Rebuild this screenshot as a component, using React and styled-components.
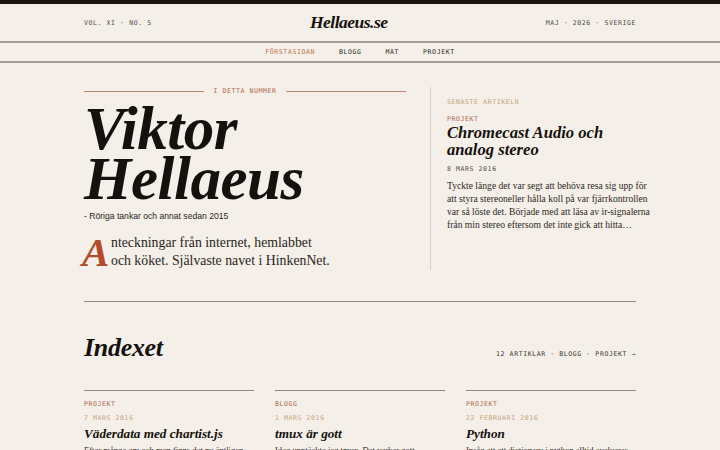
import React from "react";
import styled, { createGlobalStyle } from "styled-components";

const GlobalStyle = createGlobalStyle`
  html, body {
    margin: 0;
    padding: 0;
    background: #f4efe8;
    color: #1a1512;
  }
  * { box-sizing: border-box; }
`;

const mono = `"DejaVu Sans Mono", "Liberation Mono", monospace`;
const display = `"Liberation Serif", "DejaVu Serif", serif`;

const Page = styled.div`
  min-height: 450px;
  background: #f4efe8;
`;

const TopBar = styled.div`
  height: 4px;
  background: #1a1410;
`;

const Masthead = styled.header`
  display: flex;
  align-items: center;
  justify-content: space-between;
  height: 39px;
  padding: 0 84px;
  border-bottom: 2px solid #a39d95;
`;

const Meta = styled.div`
  font-family: ${mono};
  font-size: 6.5px;
  letter-spacing: 0.6px;
  color: ${(p) => p.color || "#4f4a44"};
  text-transform: uppercase;
  white-space: nowrap;
  line-height: ${(p) => p.lh || "10px"};
`;

const Logo = styled.div`
  font-family: ${display};
  font-weight: 700;
  font-style: italic;
  font-size: 17.5px;
  letter-spacing: -0.5px;
  color: #15110e;
`;

const Nav = styled.nav`
  display: flex;
  justify-content: center;
  align-items: center;
  gap: 24px;
  height: 20px;
  border-bottom: 2px solid #a39d95;
`;

const NavItem = styled.a`
  font-family: ${mono};
  font-size: 6.5px;
  letter-spacing: 0.6px;
  color: ${(p) => (p.active ? "#c0714f" : "#2a2520")};
  text-decoration: none;
`;

const Container = styled.main`
  padding: 0 84px;
`;

const Hero = styled.section`
  display: flex;
  padding: 24px 0 31px;
  border-bottom: 1.5px solid #8f8980;
`;

const HeroLeft = styled.div`
  width: 322px;
  flex-shrink: 0;
`;

const Kicker = styled.div`
  display: flex;
  align-items: center;
  gap: 9px;
  height: 8px;
  &::before, &::after {
    content: "";
    flex: 1;
    height: 1px;
    background: #b98570;
  }
`;

const Name = styled.h1`
  margin: 9px 0 0;
  font-family: ${display};
  font-weight: 700;
  font-style: italic;
  font-size: 61px;
  line-height: 50px;
  letter-spacing: -0.5px;
  color: #15110e;
`;

const Tagline = styled.p`
  margin: 6px 0 0;
  font-family: "Liberation Sans", Arial, sans-serif;
  font-size: 8.6px;
  line-height: 12px;
  color: #2a2520;
`;

const Lede = styled.p`
  margin: 12px 0 0;
  font-family: ${display};
  font-size: 13.8px;
  line-height: 18px;
  white-space: nowrap;
  color: #2a2520;
`;

const DropCap = styled.span`
  float: left;
  width: 29px;
  height: 35px;
  font-family: ${display};
  font-weight: 700;
  font-style: italic;
  font-size: 41px;
  line-height: 35px;
  margin: 1px 0 0 -2px;
  color: #b04b2c;
`;

const HeroRight = styled.aside`
  flex: 1;
  min-width: 0;
  margin-left: 24px;
  padding: 10px 0 0 16px;
  border-left: 1px solid #d8d1c7;
`;

const Category = styled(Meta)`
  margin-top: ${(p) => p.mt || "0"};
`;

const FeatureTitle = styled.h2`
  margin: 0;
  font-family: ${display};
  font-weight: 700;
  font-style: italic;
  font-size: 16.6px;
  line-height: 17px;
  color: #15110e;
`;

const Excerpt = styled.p`
  margin: ${(p) => p.mt || "5px"} 0 0;
  font-family: ${display};
  font-size: ${(p) => p.size || "9.6px"};
  line-height: 13px;
  color: #2e2924;
  white-space: ${(p) => (p.lines ? "nowrap" : "normal")};
`;

const IndexHead = styled.div`
  display: flex;
  justify-content: space-between;
  align-items: baseline;
  margin-top: 31px;
`;

const IndexTitle = styled.h2`
  margin: 0;
  font-family: ${display};
  font-weight: 700;
  font-style: italic;
  font-size: 26px;
  line-height: 30px;
  letter-spacing: -0.3px;
  color: #15110e;
`;

const Cards = styled.div`
  display: grid;
  grid-template-columns: repeat(3, 1fr);
  gap: 21px;
  margin-top: 27px;
`;

const Card = styled.article`
  border-top: 1.5px solid #8f8980;
  padding-top: 9px;
`;

const CardTitle = styled.h3`
  margin: 3px 0 0;
  font-family: ${display};
  font-weight: 700;
  font-style: italic;
  font-size: 13.2px;
  line-height: 16px;
  color: #15110e;
`;

const accent = "#b0654a";
const tan = "#c8a47c";

const excerptLines = [
  "Tyckte länge det var segt att behöva resa sig upp för",
  "att styra stereoneller hålla koll på var fjärrkontrollen",
  "var så löste det. Började med att läsa av ir-signalerna",
  "från min stereo eftersom det inte gick att hitta…",
];

const posts = [
  { cat: "Projekt", date: "7 mars 2016", title: "Väderdata med chartist.js", text: "Efter många om och men finns det nu äntligen lite väderdata att titta på i HinkenNet." },
  { cat: "Blogg", date: "1 mars 2016", title: "tmux är gott", text: "Idag upptäckte jag tmux. Det verkar gott." },
  { cat: "Projekt", date: "22 februari 2016", title: "Python", text: "Insåg att ett dictionary i python alltid evalueras alla värden när det skapas." },
];

export default function App() {
  return (
    <Page>
      <GlobalStyle />
      <TopBar />
      <Masthead>
        <Meta>Vol. XI · No. 5</Meta>
        <Logo>Hellaeus.se</Logo>
        <Meta>Maj · 2026 · Sverige</Meta>
      </Masthead>
      <Nav>
        <NavItem active>FÖRSTASIDAN</NavItem>
        <NavItem>BLOGG</NavItem>
        <NavItem>MAT</NavItem>
        <NavItem>PROJEKT</NavItem>
      </Nav>
      <Container>
        <Hero>
          <HeroLeft>
            <Kicker>
              <Meta color={accent} lh="8px">I detta nummer</Meta>
            </Kicker>
            <Name>
              Viktor
              <br />
              Hellaeus
            </Name>
            <Tagline>- Röriga tankar och annat sedan 2015</Tagline>
            <Lede>
              <DropCap>A</DropCap>nteckningar från internet, hemlabbet
              <br />
              och köket. Självaste navet i HinkenNet.
            </Lede>
          </HeroLeft>
          <HeroRight>
            <Category color={tan}>Senaste artikeln</Category>
            <Category color={accent} mt="7px">Projekt</Category>
            <FeatureTitle>Chromecast Audio och analog stereo</FeatureTitle>
            <Category color="#4f4a44" mt="6px">8 mars 2016</Category>
            <Excerpt mt="5px" lines>
              {excerptLines.map((l, i) => (
                <React.Fragment key={i}>
                  {l}
                  {i < excerptLines.length - 1 && <br />}
                </React.Fragment>
              ))}
            </Excerpt>
          </HeroRight>
        </Hero>
        <IndexHead>
          <IndexTitle>Indexet</IndexTitle>
          <Meta color="#3a352f">12 artiklar · Blogg · Projekt →</Meta>
        </IndexHead>
        <Cards>
          {posts.map((p) => (
            <Card key={p.title}>
              <Meta color={accent} lh="8px">{p.cat}</Meta>
              <Category color={tan} mt="5px">{p.date}</Category>
              <CardTitle>{p.title}</CardTitle>
              <Excerpt mt="2px" size="8.6px">{p.text}</Excerpt>
            </Card>
          ))}
        </Cards>
      </Container>
    </Page>
  );
}
